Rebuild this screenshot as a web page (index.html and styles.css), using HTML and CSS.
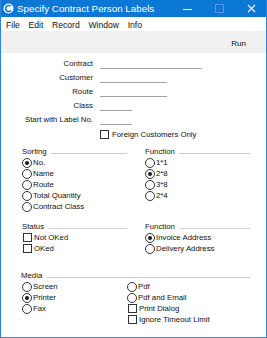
FILE: index.html
```html
<!DOCTYPE html>
<html lang="en">
<head>
    <meta charset="UTF-8">
    <title>Specify Contract Person Labels</title>
    <link rel="stylesheet" href="styles.css">
</head>
<body>
    <div class="window">
        <div class="titlebar">
            <svg class="app-icon" width="11" height="11" viewBox="0 0 11 11">
                <circle cx="5.5" cy="5.5" r="5" fill="#fff"/>
                <path d="M7.6 3.2 A3 3 0 1 0 8 7.4" fill="none" stroke="#0b78d6" stroke-width="1.6"/>
            </svg>
            <span class="title">Specify Contract Person Labels</span>
            <div class="controls">
                <span class="ctl"><svg width="9" height="9" viewBox="0 0 9 9"><path d="M0 5.5 H9" stroke="#fff" stroke-width="1"/></svg></span>
                <span class="ctl"><svg width="9" height="9" viewBox="0 0 9 9"><rect x="0.5" y="0.5" width="8" height="8" fill="none" stroke="#4d9be3" stroke-width="1"/></svg></span>
                <span class="ctl"><svg width="9" height="9" viewBox="0 0 9 9"><path d="M1 1 L8 8 M8 1 L1 8" stroke="#fff" stroke-width="1.1"/></svg></span>
            </div>
        </div>
        <div class="menubar">
            <span>File</span>
            <span>Edit</span>
            <span>Record</span>
            <span>Window</span>
            <span>Info</span>
        </div>
        <div class="toolbar">
            <span class="run">Run</span>
        </div>
        <div class="form">
            <div class="fields">
                <span class="label">Contract</span><span class="field long"></span>
                <span class="label">Customer</span><span class="field mid"></span>
                <span class="label">Route</span><span class="field mid"></span>
                <span class="label">Class</span><span class="field short"></span>
                <span class="label">Start with Label No.</span><span class="field short"></span>
                <span></span><span class="option"><span class="box"></span>Foreign Customers Only</span>
            </div>

            <div class="groups">
                <div class="group">
                    <div class="head"><span>Sorting</span><i></i></div>
                    <span class="option"><span class="radio on"></span>No.</span>
                    <span class="option"><span class="radio"></span>Name</span>
                    <span class="option"><span class="radio"></span>Route</span>
                    <span class="option"><span class="radio"></span>Total Quantity</span>
                    <span class="option"><span class="radio"></span>Contract Class</span>
                </div>
                <div class="group">
                    <div class="head"><span>Function</span><i></i></div>
                    <span class="option"><span class="radio"></span>1*1</span>
                    <span class="option"><span class="radio on"></span>2*8</span>
                    <span class="option"><span class="radio"></span>3*8</span>
                    <span class="option"><span class="radio"></span>2*4</span>
                </div>
                <div class="group">
                    <div class="head"><span>Status</span><i></i></div>
                    <span class="option boxed"><span class="box"></span>Not OKed</span>
                    <span class="option boxed"><span class="box"></span>OKed</span>
                </div>
                <div class="group">
                    <div class="head"><span>Function</span><i></i></div>
                    <span class="option"><span class="radio on"></span>Invoice Address</span>
                    <span class="option"><span class="radio"></span>Delivery Address</span>
                </div>
            </div>

            <div class="media">
                <div class="head"><span>Media</span><i></i></div>
                <div class="media-cols">
                    <div class="group">
                        <span class="option"><span class="radio"></span>Screen</span>
                        <span class="option"><span class="radio on"></span>Printer</span>
                        <span class="option"><span class="radio"></span>Fax</span>
                    </div>
                    <div class="group">
                        <span class="option"><span class="radio"></span>Pdf</span>
                        <span class="option"><span class="radio"></span>Pdf and Email</span>
                        <span class="option boxed"><span class="box"></span>Print Dialog</span>
                        <span class="option boxed"><span class="box"></span>Ignore Timeout Limit</span>
                    </div>
                </div>
            </div>
        </div>
    </div>
</body>
</html>
```

FILE: styles.css
```css
body {
    margin: 0;
    font-family: 'Liberation Sans', Arial, sans-serif;
    color: #111;
}
.window {
    width: 267px;
    height: 338px;
    box-sizing: border-box;
    border: 1px solid #2a87d8;
    border-top: none;
    background-color: #fff;
    overflow: hidden;
}
.titlebar {
    height: 17px;
    background-color: #0b78d6;
    display: flex;
    align-items: center;
    margin: 0 -1px;
    padding-left: 3px;
}
.app-icon {
    flex: none;
}
.title {
    color: #fff;
    font-size: 9.8px;
    margin-left: 3px;
}
.controls {
    margin-left: auto;
    display: flex;
}
.ctl {
    width: 32px;
    height: 17px;
    display: flex;
    align-items: center;
    justify-content: center;
}
.menubar {
    height: 14px;
    box-sizing: border-box;
    padding: 3px 0 0 5px;
    display: flex;
    gap: 8.7px;
    font-size: 8.6px;
    line-height: 10px;
}
.toolbar {
    height: 22px;
    box-sizing: border-box;
    padding: 2px 20px 0 0;
    background-color: #f0f0f0;
    display: flex;
    align-items: center;
    justify-content: flex-end;
    font-size: 8px;
}
.form {
    padding-top: 4px;
    font-size: 7.8px;
}
.fields {
    display: grid;
    grid-template-columns: 92px auto;
    grid-auto-rows: 14px;
    column-gap: 7px;
}
.label {
    text-align: right;
    line-height: 14px;
}
.field {
    height: 11px;
    border-bottom: 1px solid #a3a3a3;
}
.field.long {
    width: 102px;
}
.field.mid {
    width: 67px;
}
.field.short {
    width: 32px;
}
.option {
    display: flex;
    align-items: center;
    height: 11px;
    line-height: 11px;
    white-space: nowrap;
}
.fields .option {
    height: 14px;
}
.box {
    width: 9px;
    height: 9px;
    box-sizing: border-box;
    border: 1px solid #333;
    margin-right: 2px;
    flex: none;
}
.fields .box {
    margin-right: 3px;
}
.boxed {
    padding-left: 1px;
}
.radio {
    width: 10px;
    height: 10px;
    box-sizing: border-box;
    border: 1px solid #333;
    border-radius: 50%;
    margin-right: 1px;
    flex: none;
    display: flex;
}
.radio.on::after {
    content: "";
    width: 4px;
    height: 4px;
    border-radius: 50%;
    background-color: #1a1a1a;
    margin: auto;
}
.groups {
    margin-top: 5px;
    padding-left: 21px;
    display: grid;
    grid-template-columns: 105px 105px;
    column-gap: 18px;
    row-gap: 9px;
}
.group {
    display: flex;
    flex-direction: column;
}
.head {
    display: flex;
    align-items: center;
    gap: 4px;
    height: 11px;
}
.head i {
    flex: 1;
    height: 1px;
    margin-top: 3px;
    background-color: #cfcfcf;
}
.media {
    margin-top: 16px;
    padding: 0 16px 0 21px;
}
.media .head {
    margin-left: -1px;
}
.media-cols {
    display: grid;
    grid-template-columns: 105px auto;
}
```
